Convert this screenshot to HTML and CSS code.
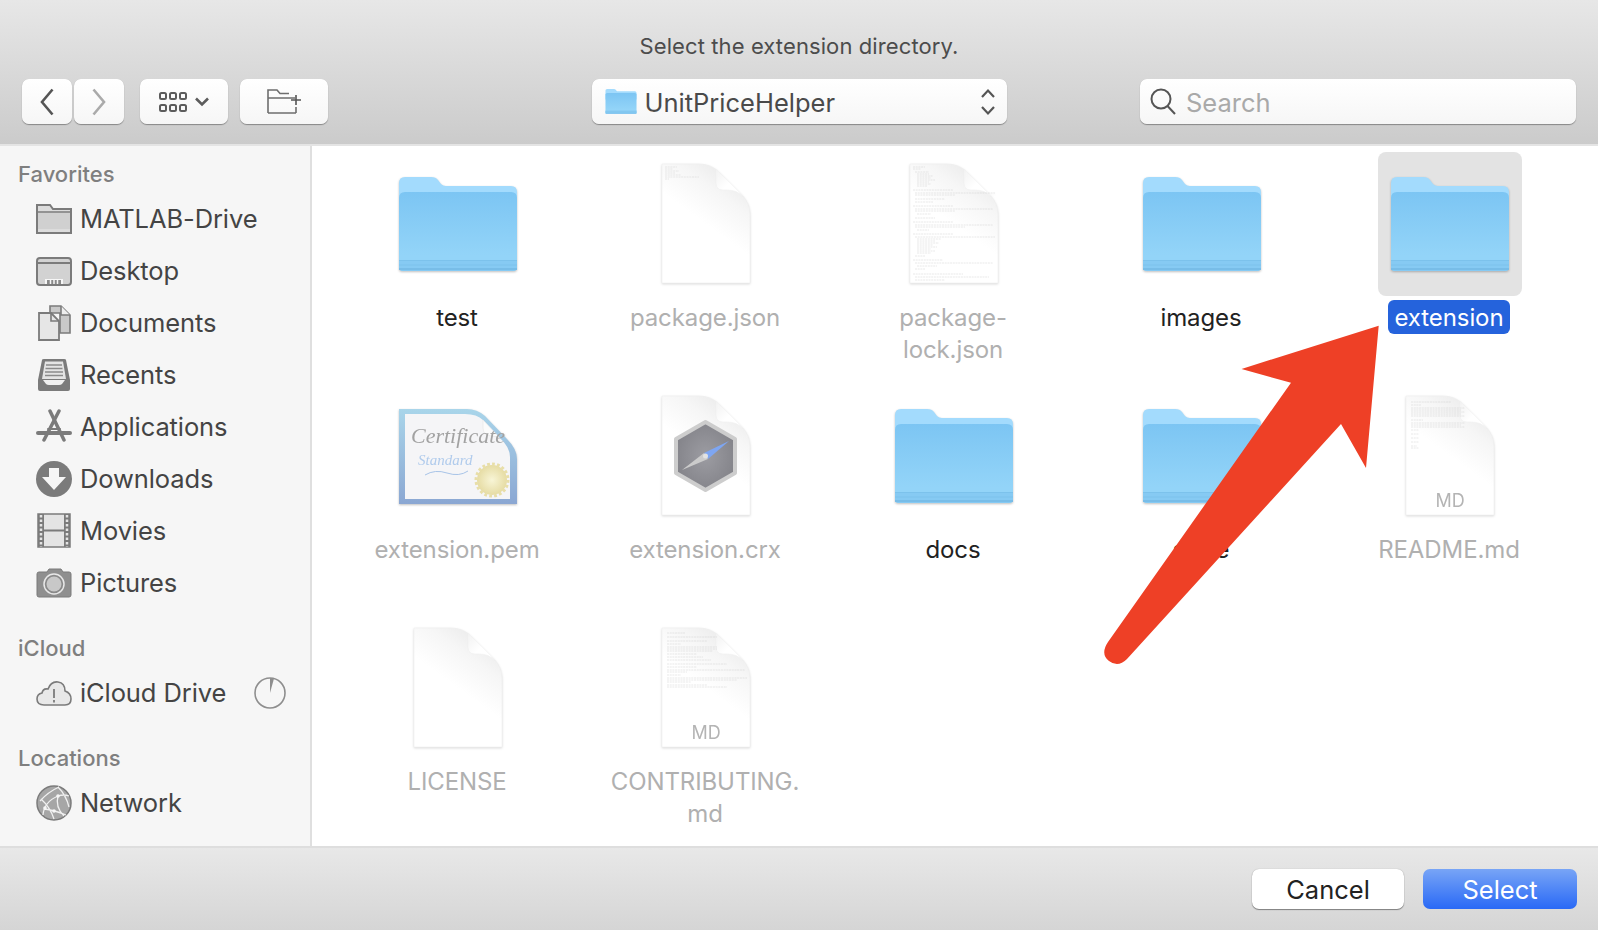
FILE: index.html
```html
<!DOCTYPE html>
<html lang="en">
<head>
    <meta charset="UTF-8">
    <meta name="viewport" content="width=device-width, initial-scale=1.0">
    <title>Select the extension directory.</title>
    <link rel="stylesheet" href="styles.css">
</head>
<body>
    <!-- Shared icons -->
    <svg class="defs" width="0" height="0">
        <defs>
            <linearGradient id="folderFront" x1="0" y1="0" x2="0" y2="1">
                <stop offset="0" stop-color="#7cc5f3"/>
                <stop offset="0.8" stop-color="#93d4f8"/>
                <stop offset="1" stop-color="#93d4f8"/>
            </linearGradient>
            <linearGradient id="pageShade" gradientUnits="userSpaceOnUse" x1="78" y1="18" x2="46" y2="62">
                <stop offset="0" stop-color="#ececec"/>
                <stop offset="0.4" stop-color="#f6f6f6"/>
                <stop offset="1" stop-color="#ffffff"/>
            </linearGradient>
            <linearGradient id="flapShade" x1="0" y1="0" x2="1" y2="1">
                <stop offset="0" stop-color="#f2f2f2"/>
                <stop offset="0.5" stop-color="#ffffff"/>
            </linearGradient>
            <linearGradient id="certFrame" x1="0" y1="0" x2="0" y2="1">
                <stop offset="0" stop-color="#a9d5ea"/>
                <stop offset="1" stop-color="#8aa6d2"/>
            </linearGradient>
            <radialGradient id="certSeal">
                <stop offset="0" stop-color="#f8f5d6"/>
                <stop offset="1" stop-color="#e6dca4"/>
            </radialGradient>
            <radialGradient id="crxFace">
                <stop offset="0" stop-color="#9c9ca2"/>
                <stop offset="1" stop-color="#85858b"/>
            </radialGradient>
            <symbol id="folder" viewBox="0 0 118 95">
                <path d="M0 6Q0 0 6 0H32Q37 0 39 3L42 7Q44 9 47 9H112Q118 9 118 15V40H0Z" fill="#a3dbfd"/>
                <path d="M0 21Q0 15 6 15H112Q118 15 118 21V90Q118 94 114 94H4Q0 94 0 90Z" fill="url(#folderFront)"/>
                <path d="M0 83H118V90Q118 94 114 94H4Q0 94 0 90Z" fill="#86caf3"/>
                <path d="M0 83.500H118M0 88H118" stroke="#7cc2ec" stroke-width="1"/>
                <path d="M0 92H118" stroke="#78bde8" stroke-width="2"/>
            </symbol>
            <symbol id="page" viewBox="0 0 90 122">
                <path d="M1 1H38Q50 1 58 9L80 31Q89 40 89 51V120H1Z" fill="url(#pageShade)" stroke="#efefef" stroke-width="0.600"/>
                <path d="M55 6L83 34Q76 27 66 27H62Q55 27 55 20Z" fill="url(#flapShade)"/>
                <path d="M55 7V20Q55 27 62 27H66Q76 27 83 34" fill="none" stroke="#f0f0f0" stroke-width="0.600"/>
            </symbol>
        </defs>
    </svg>

    <div class="dialog">
        <header class="toolbar">
            <div class="prompt">Select the extension directory.</div>
            <div class="toolbar-row">
                <div class="tools">
                    <div class="nav-group">
                        <div class="tool-btn nav-btn">
                            <svg width="14" height="28" viewBox="0 0 14 28"><path d="M12.500 1.500L2 14L12.500 26.500" fill="none" stroke="#555" stroke-width="2.600"/></svg>
                        </div>
                        <div class="tool-btn nav-btn">
                            <svg width="14" height="28" viewBox="0 0 14 28"><path d="M1.500 1.500L12 14L1.500 26.500" fill="none" stroke="#aaa" stroke-width="2.600"/></svg>
                        </div>
                    </div>
                    <div class="tool-btn view-btn">
                        <svg width="50" height="20" viewBox="0 0 50 20" fill="none" stroke="#5c5c5c" stroke-width="2">
                            <rect x="1" y="1" width="6" height="6" rx="1.500"/><rect x="11" y="1" width="6" height="6" rx="1.500"/><rect x="21" y="1" width="6" height="6" rx="1.500"/>
                            <rect x="1" y="13" width="6" height="6" rx="1.500"/><rect x="11" y="13" width="6" height="6" rx="1.500"/><rect x="21" y="13" width="6" height="6" rx="1.500"/>
                            <path d="M37 6.500L43 12.500L49 6.500" stroke-width="2.600"/>
                        </svg>
                    </div>
                    <div class="tool-btn folder-btn">
                        <svg width="35" height="25" viewBox="0 0 35 25" fill="none" stroke="#6e6e6e" stroke-width="1.600">
                            <path d="M1 24V1H10L13 4.500H22M1 9H28M29 24H1M29 24V18"/>
                            <path d="M29 6V16M24 11H34" stroke="#555"/>
                        </svg>
                    </div>
                </div>
                <div class="path-popup">
                    <svg class="path-folder" width="32" height="25"><use href="#folder"/></svg>
                    <span class="path-name">UnitPriceHelper</span>
                    <svg class="path-arrows" width="16" height="28" viewBox="0 0 16 28" fill="none" stroke="#555" stroke-width="2.200">
                        <path d="M2 9L8 2.500L14 9M2 19L8 25.500L14 19"/>
                    </svg>
                </div>
                <div class="search">
                    <svg width="27" height="27" viewBox="0 0 27 27" fill="none" stroke="#555" stroke-width="2">
                        <circle cx="11" cy="11" r="9.500"/><path d="M17.500 18L25 26"/>
                    </svg>
                    <span class="search-text">Search</span>
                </div>
            </div>
        </header>

        <main class="browser">
            <aside class="sidebar">
                <div class="side-title">Favorites</div>
                <div class="side-item">
                    <svg width="36" height="36" viewBox="0 0 36 36"><path d="M1 4H14L17 8H35V32H1Z" fill="#dcdcdc" stroke="#7b7b7b" stroke-width="2"/><path d="M1 11H35" stroke="#7b7b7b" stroke-width="1.500"/><path d="M2 12H34V28H2Z" fill="#d0d0d0"/></svg>
                    MATLAB-Drive
                </div>
                <div class="side-item">
                    <svg width="36" height="36" viewBox="0 0 36 36"><rect x="1" y="5" width="34" height="27" rx="3" fill="#d2d2d2" stroke="#7b7b7b" stroke-width="2"/><path d="M1 10H35" stroke="#7b7b7b" stroke-width="2"/><path d="M9 31V26H27V31Z" fill="#f6f6f6"/><path d="M11 27H25V31H11Z" fill="#8a8a8a"/><path d="M14.500 27V31M18 27V31M21.500 27V31" stroke="#f6f6f6" stroke-width="1.500"/></svg>
                    Desktop
                </div>
                <div class="side-item">
                    <svg width="36" height="36" viewBox="0 0 36 36"><path d="M14 1H25L34 10V28H24V8H14Z" fill="#c9c9c9" stroke="#7b7b7b" stroke-width="1.600"/><path d="M25 1V10H34" fill="#eee" stroke="#7b7b7b" stroke-width="1.600"/><path d="M3 8H15L23 16V35H3Z" fill="#e6e6e6" stroke="#7b7b7b" stroke-width="1.800"/><path d="M15 8V16H23" fill="none" stroke="#7b7b7b" stroke-width="1.600"/></svg>
                    Documents
                </div>
                <div class="side-item">
                    <svg width="36" height="36" viewBox="0 0 36 36"><path d="M6 3Q6 2 8 2H28Q30 2 30 3L34 23V32Q34 34 32 34H4Q2 34 2 32V23Z" fill="#7b7b7b"/><path d="M9 4.500H27L30 22H6Z" fill="#e4e4e4"/><path d="M10 8H26M9.500 11.500H26.500M9 15H27M9 18.500H27" stroke="#8a8a8a" stroke-width="1.500"/><path d="M7 23H29L26 27Q25 28 23 28H13Q11 28 10 27Z" fill="#f0f0f0"/></svg>
                    Recents
                </div>
                <div class="side-item">
                    <svg width="36" height="36" viewBox="0 0 36 36" fill="none" stroke="#7b7b7b" stroke-linecap="round"><path d="M14 2L28 31" stroke-width="3.500"/><path d="M23 2L8 31" stroke-width="3.500"/><path d="M2 24H34" stroke-width="4"/><path d="M12 20H24" stroke-width="2"/></svg>
                    Applications
                </div>
                <div class="side-item">
                    <svg width="36" height="36" viewBox="0 0 36 36"><circle cx="18" cy="18" r="18" fill="#7b7b7b"/><path d="M13 7H23V16H30L18 29L6 16H13Z" fill="#f6f6f6"/></svg>
                    Downloads
                </div>
                <div class="side-item">
                    <svg width="36" height="36" viewBox="0 0 36 36"><rect x="2" y="1" width="32" height="33" fill="#e4e4e4" stroke="#7b7b7b" stroke-width="1.500"/><path d="M2 1H8V34H2ZM28 1H34V34H28Z" fill="#7b7b7b"/><path d="M8 17.500H28" stroke="#7b7b7b" stroke-width="2"/><path d="M5 2V34M31 2V34" stroke="#e4e4e4" stroke-width="2.500" stroke-dasharray="2.500 2"/></svg>
                    Movies
                </div>
                <div class="side-item">
                    <svg width="36" height="36" viewBox="0 0 36 36"><path d="M1 9Q1 7 3 7H11L13 4H25L27 7H33Q35 7 35 9V30Q35 32 33 32H3Q1 32 1 30Z" fill="#8f8f8f" stroke="#7b7b7b"/><circle cx="18" cy="19" r="10" fill="#8a8a8a" stroke="#e8e8e8" stroke-width="1.500"/><circle cx="18" cy="19" r="7.500" fill="#c8c8c8"/></svg>
                    Pictures
                </div>

                <div class="side-title section-gap">iCloud</div>
                <div class="side-item">
                    <svg width="36" height="36" viewBox="0 0 36 36"><path d="M8 30Q1 30 1 24Q1 19 6 18Q7 13 12 14Q15 6 22 7Q29 8 29 16Q35 18 35 24Q35 30 29 30Z" fill="#e8e8e8" stroke="#7b7b7b" stroke-width="1.600"/><path d="M18 14V23" stroke="#7b7b7b" stroke-width="1.800"/><path d="M18 25V27.500" stroke="#7b7b7b" stroke-width="1.800"/></svg>
                    iCloud Drive
                    <svg class="side-progress" width="32" height="32" viewBox="0 0 32 32"><circle cx="16" cy="16" r="15" fill="none" stroke="#8e8e8e" stroke-width="1.600"/><path d="M16 16L16 1A15 15 0 0 1 20 1.500Z" fill="#8e8e8e"/></svg>
                </div>

                <div class="side-title section-gap">Locations</div>
                <div class="side-item">
                    <svg width="36" height="36" viewBox="0 0 36 36"><circle cx="18" cy="18" r="17" fill="#a6a6a6" stroke="#7b7b7b" stroke-width="1.500"/><path d="M4 16Q12 7 23 2M7 30Q8 17 22 11Q28 9 33 11M18 34Q14 22 5 14M22 11Q19 22 28 31M8 24Q18 25 30 30M22 2Q30 10 33 22" fill="none" stroke="#f0f0f0" stroke-width="1.300"/><circle cx="22" cy="11" r="1.800" fill="#f6f6f6"/><circle cx="9" cy="23" r="1.800" fill="#f6f6f6"/><circle cx="18" cy="26" r="1.800" fill="#f6f6f6"/></svg>
                    Network
                </div>
            </aside>

            <section class="files">
                <div class="file">
                    <div class="file-icon"><svg class="folder-icon"><use href="#folder"/></svg></div>
                    <div class="file-name">test</div>
                </div>
                <div class="file is-off">
                    <div class="file-icon">
                        <svg class="doc-icon" viewBox="0 0 90 122">
                            <use href="#page"/>
                            <path d="M4 4h12M4 6h8M4 8h14M4 10h10M4 12h16M4 14h34M4 16h4" stroke="#cccccc" stroke-width="0.400" stroke-dasharray="2 .7"/>
                        </svg>
                    </div>
                    <div class="file-name">package.json</div>
                </div>
                <div class="file is-off">
                    <div class="file-icon">
                        <svg class="doc-icon" viewBox="0 0 90 122">
                            <use href="#page"/>
                            <path d="M4 4h12M4 6h8M6 9h14M8 11h12M8 13h16M8 15h14M8 17h18M8 19h12M8 21h14M8 23h10M4 27h40M6 30h80M6 32h40M6 36h30M6 39h18M4 43h40M6 46h78M6 48h40M8 51h14M6 55h20M4 59h40M6 62h78M6 64h50M8 67h12M4 71h40M6 74h80M8 76h24M8 78h18M8 80h22M8 82h16M8 84h20M8 86h14M8 88h18M8 90h14M6 93h10M4 97h30M6 100h78M8 103h20M6 106h10M4 111h50M6 114h74M6 117h30" stroke="#c8c8c8" stroke-width="0.400" stroke-dasharray="2 .7"/>
                        </svg>
                    </div>
                    <div class="file-name">package-<br>lock.json</div>
                </div>
                <div class="file">
                    <div class="file-icon"><svg class="folder-icon"><use href="#folder"/></svg></div>
                    <div class="file-name">images</div>
                </div>
                <div class="file is-selected">
                    <div class="file-icon"><svg class="folder-icon"><use href="#folder"/></svg></div>
                    <div class="file-name">extension</div>
                </div>

                <div class="file is-off">
                    <div class="file-icon">
                        <svg class="folder-icon" viewBox="0 0 118 95">
                            <path d="M0 0H68Q78 0 86 7L108 30Q118 40 118 50V97H0Z" fill="url(#certFrame)"/>
                            <path d="M6 5H66Q78 5 84 11L100 28Q111 38 111 48V90H6Z" fill="#f5f5f7"/>
                            <path d="M84 11V19Q84 26 92 27L100 28Z" fill="#fbfbfb" stroke="#e4e4e4" stroke-width="0.600"/>
                            <text class="cert-title" x="12" y="34">Certificate</text>
                            <text class="cert-sub" x="19" y="56">Standard</text>
                            <path d="M26 66Q36 60 48 64T69 62" fill="none" stroke="#a8c4e8" stroke-width="1"/>
                            <circle cx="93" cy="71" r="15" fill="url(#certSeal)"/>
                            <circle cx="93" cy="71" r="16" fill="none" stroke="#e8dea8" stroke-width="3" stroke-dasharray="2.800 2.200"/>
                        </svg>
                    </div>
                    <div class="file-name">extension.pem</div>
                </div>
                <div class="file is-off">
                    <div class="file-icon">
                        <svg class="doc-icon" viewBox="0 0 90 122">
                            <use href="#page"/>
                            <path d="M44.500 27L74 44V78L44.500 95L15 78V44Z" fill="url(#crxFace)" stroke="#cdcdcd" stroke-width="4" stroke-linejoin="round"/>
                            <path d="M43 58L68 46L47 64Z" fill="#7ea6f2"/>
                            <path d="M43 58L47 64L21 75Z" fill="#cbcbcb"/>
                            <circle cx="44.500" cy="61" r="2.500" fill="#e2e2e2"/>
                        </svg>
                    </div>
                    <div class="file-name">extension.crx</div>
                </div>
                <div class="file">
                    <div class="file-icon"><svg class="folder-icon"><use href="#folder"/></svg></div>
                    <div class="file-name">docs</div>
                </div>
                <div class="file">
                    <div class="file-icon"><svg class="folder-icon"><use href="#folder"/></svg></div>
                    <div class="file-name">store</div>
                </div>
                <div class="file is-off">
                    <div class="file-icon">
                        <svg class="doc-icon" viewBox="0 0 90 122">
                            <use href="#page"/>
                            <path d="M6 7h40M6 10h10M6 13h54M6 15h50M6 17h54M6 19h50M6 21h54M6 25h12M6 28h54M6 30h50M6 32h54M6 35h8M6 39h8M6 43h8M6 47h8M6 51h6M6 53h8" stroke="#c6c6c6" stroke-width="0.400" stroke-dasharray="2 .7"/>
                            <text class="md-tag" x="45" y="112">MD</text>
                        </svg>
                    </div>
                    <div class="file-name">README.md</div>
                </div>

                <div class="file is-off">
                    <div class="file-icon"><svg class="doc-icon" viewBox="0 0 90 122"><use href="#page"/></svg></div>
                    <div class="file-name">LICENSE</div>
                </div>
                <div class="file is-off">
                    <div class="file-icon">
                        <svg class="doc-icon" viewBox="0 0 90 122">
                            <use href="#page"/>
                            <path d="M6 6h18M6 10h50M6 14h40M6 17h14M6 20h50M6 22h50M6 24h46M6 27h30M6 30h36M6 33h44M6 37h60M6 40h30M6 43h78M6 45h20M6 48h14M6 51h80M6 53h70M6 55h24M6 58h40M6 60h60" stroke="#c6c6c6" stroke-width="0.400" stroke-dasharray="2 .7"/>
                            <text class="md-tag" x="45" y="112">MD</text>
                        </svg>
                    </div>
                    <div class="file-name">CONTRIBUTING.<br>md</div>
                </div>
            </section>
        </main>

        <footer class="actions">
            <div class="btn-cancel">Cancel</div>
            <div class="btn-select">Select</div>
        </footer>

        <!-- Red arrow drawn over the dialog -->
        <svg class="arrow" width="1598" height="930" viewBox="0 0 1598 930">
            <path d="M1378.700 325.700L1241.500 369L1291 382.700L1108 642Q1100 654 1109 661Q1118 668 1127 659L1341 424L1366 468Z" fill="#ee4026"/>
        </svg>
    </div>
</body>
</html>
```

FILE: styles.css
```css
body {
    margin: 0;
    font-family: "Inter", "Liberation Sans", sans-serif;
    background-color: #ffffff;
}
.defs {
    position: absolute;
}
.dialog {
    position: relative;
    display: flex;
    flex-direction: column;
    width: 1598px;
    height: 930px;
    overflow: hidden;
}

/* Toolbar */
.toolbar {
    box-sizing: border-box;
    height: 146px;
    padding-top: 32px;
    background: linear-gradient(#e7e7e7, #cbcbcb);
    border-bottom: 2px solid #e4e4e4;
}
.prompt {
    height: 28px;
    margin-bottom: 19px;
    line-height: 28px;
    font-size: 22px;
    letter-spacing: 0.1px;
    color: #4c4c4c;
    text-align: center;
}
.toolbar-row {
    display: grid;
    grid-template-columns: 1fr 415px 1fr;
    height: 45px;
    padding: 0 22px;
}
.tools {
    display: flex;
}
.nav-group {
    display: flex;
    gap: 2px;
    margin-right: 16px;
}
.tool-btn, .path-popup, .search {
    display: flex;
    align-items: center;
    box-sizing: border-box;
    height: 45px;
    border-radius: 7px;
    background: linear-gradient(#ffffff, #f6f6f6);
    box-shadow: 0 1px 1px rgba(0, 0, 0, 0.35), 0 0 0.5px rgba(0, 0, 0, 0.25);
}
.tool-btn {
    justify-content: center;
}
.nav-btn {
    width: 50px;
}
.view-btn {
    width: 88px;
    margin-right: 12px;
}
.folder-btn {
    width: 88px;
}
.path-popup {
    padding: 0 11px 0 13px;
    font-size: 25.5px;
    color: #4a4a4a;
}
.path-name {
    margin: 2px 0 0 8px;
}
.path-arrows {
    margin-left: auto;
}
.search {
    justify-self: end;
    width: 436px;
    padding-left: 10px;
    gap: 9px;
    font-size: 25.5px;
    color: #a9a9a9;
}
.search-text {
    margin-top: 2px;
}

/* Main area */
.browser {
    display: flex;
    flex: 1;
    min-height: 0;
}
.sidebar {
    flex: none;
    box-sizing: border-box;
    width: 312px;
    padding-top: 14px;
    background-color: #f6f6f6;
    border-right: 2px solid #dfdfdf;
}
.side-title {
    height: 28px;
    margin-bottom: 5px;
    padding-left: 18px;
    line-height: 28px;
    font-size: 22px;
    font-weight: 500;
    color: #7f7f7f;
}
.section-gap {
    margin-top: 25px;
}
.side-item {
    display: flex;
    align-items: center;
    gap: 8px;
    box-sizing: border-box;
    height: 52px;
    padding: 0 0 2px 36px;
    font-size: 25.5px;
    letter-spacing: -0.1px;
    color: #444444;
}
.side-item svg {
    flex: none;
    margin-top: 2px;
}
.side-progress {
    margin-left: auto;
    margin-right: 24px;
}
.files {
    display: grid;
    flex: 1;
    grid-template-columns: repeat(5, 248px);
    grid-auto-rows: 232px;
    align-content: start;
    padding: 6px 0 0 22px;
}
.file {
    display: flex;
    flex-direction: column;
    align-items: center;
}
.file-icon {
    display: flex;
    align-items: center;
    justify-content: center;
    flex: none;
    width: 144px;
    height: 144px;
    border-radius: 8px;
}
.folder-icon {
    width: 118px;
    height: 95px;
    filter: drop-shadow(0 1px 1px rgba(0, 0, 0, 0.25));
}
.doc-icon {
    width: 90px;
    height: 122px;
    filter: drop-shadow(0 1px 1px rgba(0, 0, 0, 0.14));
}
.file-name {
    margin: 4px 2px 0 0;
    padding: 2px 7px 0;
    border-radius: 6px;
    line-height: 32px;
    font-size: 24px;
    letter-spacing: -0.1px;
    color: #222222;
    text-align: center;
}
.is-off .file-name {
    color: #b0b0b0;
}
.is-selected .file-icon {
    background-color: #e3e3e3;
}
.is-selected .file-name {
    background-color: #2563dc;
    color: #ffffff;
}
.cert-title {
    font-family: "Liberation Serif", serif;
    font-style: italic;
    font-size: 22px;
    fill: #a2a2a2;
}
.cert-sub {
    font-family: "Liberation Serif", serif;
    font-style: italic;
    font-size: 15px;
    fill: #b0cbec;
}
.md-tag {
    font-size: 18px;
    fill: #b4b4b4;
    text-anchor: middle;
}

/* Footer */
.actions {
    display: flex;
    flex: none;
    align-items: center;
    justify-content: flex-end;
    gap: 19px;
    box-sizing: border-box;
    height: 84px;
    padding: 0 21px 0 0;
    background: linear-gradient(#e8e8e8, #d5d5d5);
    border-top: 2px solid #dedede;
}
.btn-cancel, .btn-select {
    display: flex;
    align-items: center;
    justify-content: center;
    height: 40px;
    border-radius: 7px;
    font-size: 25.5px;
}
.btn-cancel {
    width: 152px;
    background-color: #ffffff;
    color: #222222;
    box-shadow: 0 1px 1px rgba(0, 0, 0, 0.4), 0 0 1px rgba(0, 0, 0, 0.3);
}
.btn-select {
    width: 154px;
    background: linear-gradient(#78a5f6, #2969f6);
    color: #ffffff;
}
.arrow {
    position: absolute;
    top: 0;
    left: 0;
}
```
